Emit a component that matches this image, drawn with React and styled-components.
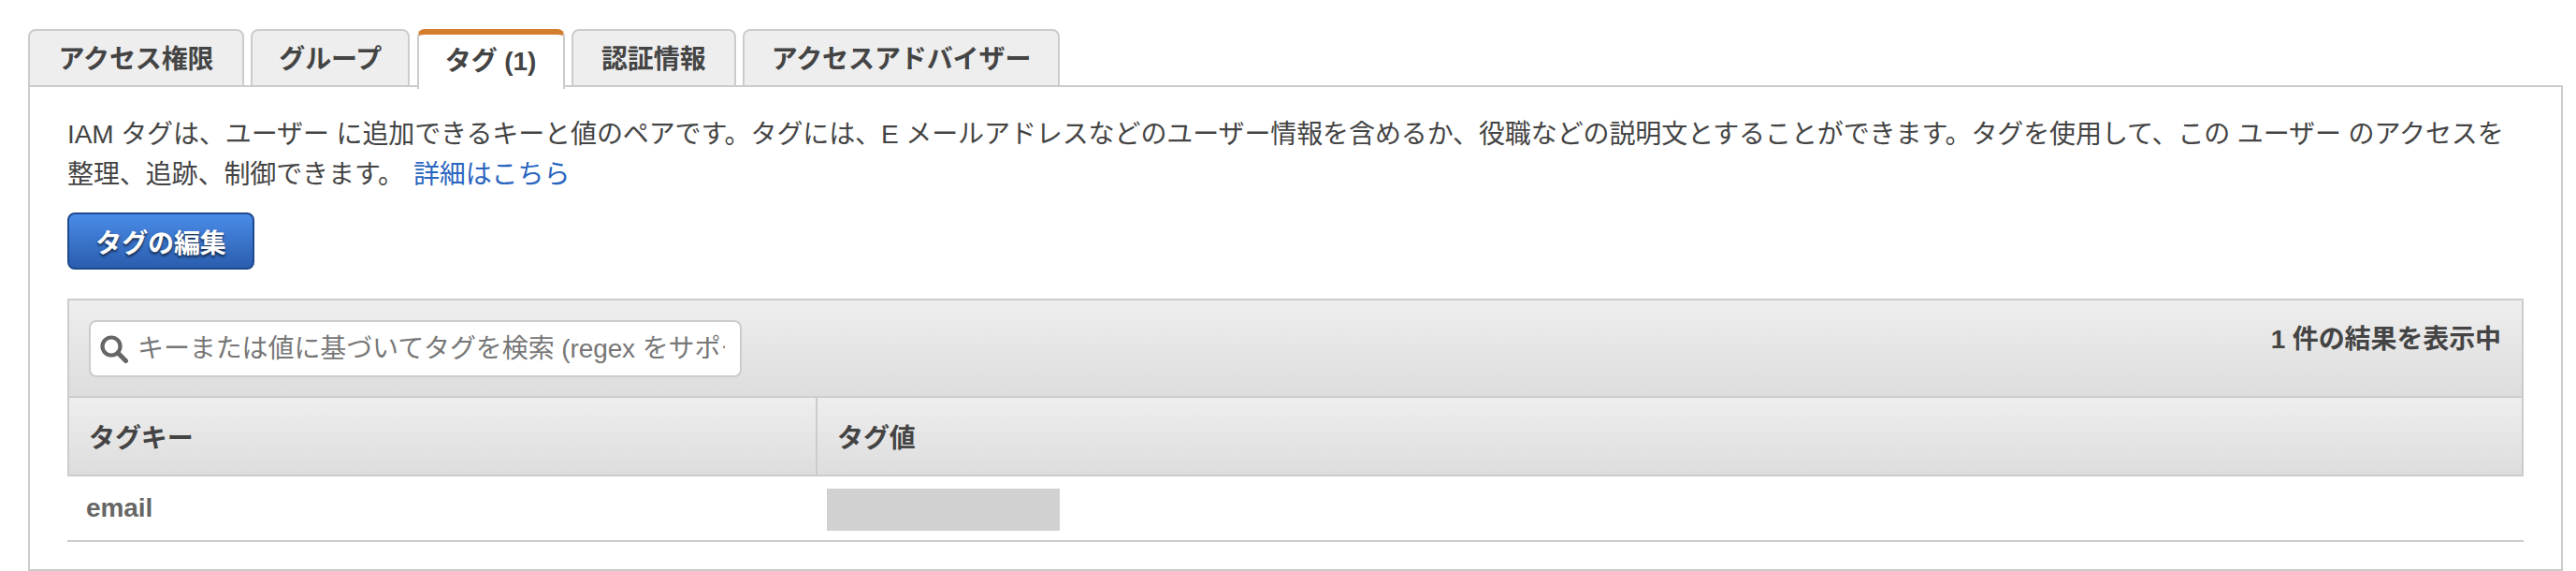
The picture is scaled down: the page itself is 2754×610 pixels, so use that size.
import React from 'react'
import styled, { createGlobalStyle } from 'styled-components'

const GlobalStyle = createGlobalStyle`
  html, body {
    margin: 0;
    padding: 0;
    background: #fff;
  }
  body {
    font-family: "Liberation Sans", "Noto Sans CJK JP", sans-serif;
    font-size: 28px;
    letter-spacing: -0.1px;
    color: #444;
  }
`

const Page = styled.div`
  width: 2754px;
  height: 610px;
  box-sizing: border-box;
  padding: 31px 14px 0 30px;
  overflow: hidden;
`

const TabBar = styled.div`
  display: flex;
  gap: 7.25px;
  position: relative;
  z-index: 1;
  margin-bottom: -2px;
`

const Tab = styled.div`
  box-sizing: border-box;
  width: ${p => p.$width}px;
  height: ${p => (p.$active ? 64 : 62)}px;
  margin-bottom: ${p => (p.$active ? -2 : 0)}px;
  display: flex;
  align-items: center;
  justify-content: center;
  padding-bottom: ${p => (p.$active ? 6 : 2)}px;
  font-weight: 700;
  color: #444;
  background: ${p => (p.$active ? '#fff' : '#eee')};
  border: 2px solid #ccc;
  border-top: ${p => (p.$active ? '6px solid #d37e2d' : '2px solid #ccc')};
  border-bottom: ${p => (p.$active ? 'none' : '2px solid #ccc')};
  border-radius: 8px 8px 0 0;
`

const Panel = styled.div`
  box-sizing: border-box;
  height: 519px;
  border: 2px solid #ccc;
  padding: 29px 40px 0;
`

const Description = styled.div`
  line-height: 43px;
`

const DescriptionLine = styled.div`
  white-space: nowrap;
`

const Link = styled.a`
  color: #2a65c0;
  text-decoration: none;
  margin-left: 10px;
`

const EditButton = styled.button`
  display: block;
  box-sizing: border-box;
  width: 200px;
  height: 61px;
  margin: 19px 0 31px;
  padding: 0;
  font: inherit;
  letter-spacing: inherit;
  font-weight: 700;
  color: #fff;
  text-shadow: 0 2px 3px rgba(0, 0, 0, 0.7);
  background: linear-gradient(#4a8ce8, #2a5dae);
  border: 2px solid #1e4a8e;
  border-radius: 8px;
`

const Table = styled.div`
  display: flex;
  flex-direction: column;
`

const Toolbar = styled.div`
  box-sizing: border-box;
  height: 106px;
  display: flex;
  align-items: flex-start;
  justify-content: space-between;
  padding: 21px 22px 0 21px;
  background: linear-gradient(#eee, #ddd);
  border: 2px solid #ccc;
`

const SearchBox = styled.label`
  box-sizing: border-box;
  width: 698px;
  height: 61px;
  display: flex;
  align-items: center;
  gap: 10px;
  padding: 0 16px 0 10px;
  background: #fff;
  border: 2px solid #ccc;
  border-radius: 8px;
`

const SearchInput = styled.input`
  flex: 1;
  min-width: 0;
  padding: 0;
  border: none;
  outline: none;
  background: transparent;
  font: inherit;
  letter-spacing: inherit;
  color: #444;
  &::placeholder {
    color: #777;
    opacity: 1;
  }
`

const ResultCount = styled.div`
  font-weight: 700;
  line-height: 42px;
`

const HeaderRow = styled.div`
  box-sizing: border-box;
  height: 84px;
  display: grid;
  grid-template-columns: 798px 1fr;
  background: linear-gradient(#eee, #ddd);
  border: 2px solid #ccc;
  border-top: none;
`

const HeaderCell = styled.div`
  display: flex;
  align-items: center;
  padding-left: 21px;
  font-weight: 700;
  border-left: ${p => (p.$divided ? '2px solid #ccc' : 'none')};
`

const BodyRow = styled.div`
  box-sizing: border-box;
  height: 70px;
  display: grid;
  grid-template-columns: 800px 1fr;
  border-bottom: 2px solid #ccc;
`

const KeyCell = styled.div`
  display: flex;
  align-items: center;
  padding-left: 20px;
  font-weight: 700;
  color: #666;
`

const ValueCell = styled.div`
  display: flex;
  align-items: flex-start;
  padding: 13px 0 0 12px;
`

const Redacted = styled.div`
  width: 249px;
  height: 45px;
  background: #d1d1d1;
`

const tabs = [
  { label: 'アクセス権限', width: 231 },
  { label: 'グループ', width: 170 },
  { label: 'タグ (1)', width: 158, active: true },
  { label: '認証情報', width: 176 },
  { label: 'アクセスアドバイザー', width: 339 },
]

function SearchIcon () {
  return (
    <svg width="30" height="30" viewBox="0 0 30 30" fill="none" stroke="#666">
      <circle cx="12" cy="12" r="9.5" strokeWidth="4.2" />
      <path d="M19.5 19.5 L27.5 27.5" strokeWidth="5" strokeLinecap="round" />
    </svg>
  )
}

export default function App () {
  return (
    <Page>
      <GlobalStyle />
      <TabBar>
        {tabs.map(tab => (
          <Tab key={tab.label} $width={tab.width} $active={tab.active}>{tab.label}</Tab>
        ))}
      </TabBar>
      <Panel>
        <Description>
          <DescriptionLine>IAM タグは、ユーザー に追加できるキーと値のペアです。タグには、E メールアドレスなどのユーザー情報を含めるか、役職などの説明文とすることができます。タグを使用して、この ユーザー のアクセスを</DescriptionLine>
          <DescriptionLine>
            整理、追跡、制御できます。
            <Link href="#">詳細はこちら</Link>
          </DescriptionLine>
        </Description>
        <EditButton>タグの編集</EditButton>
        <Table>
          <Toolbar>
            <SearchBox>
              <SearchIcon />
              <SearchInput placeholder="キーまたは値に基づいてタグを検索 (regex をサポート)" />
            </SearchBox>
            <ResultCount>1 件の結果を表示中</ResultCount>
          </Toolbar>
          <HeaderRow>
            <HeaderCell>タグキー</HeaderCell>
            <HeaderCell $divided>タグ値</HeaderCell>
          </HeaderRow>
          <BodyRow>
            <KeyCell>email</KeyCell>
            <ValueCell><Redacted /></ValueCell>
          </BodyRow>
        </Table>
      </Panel>
    </Page>
  )
}
